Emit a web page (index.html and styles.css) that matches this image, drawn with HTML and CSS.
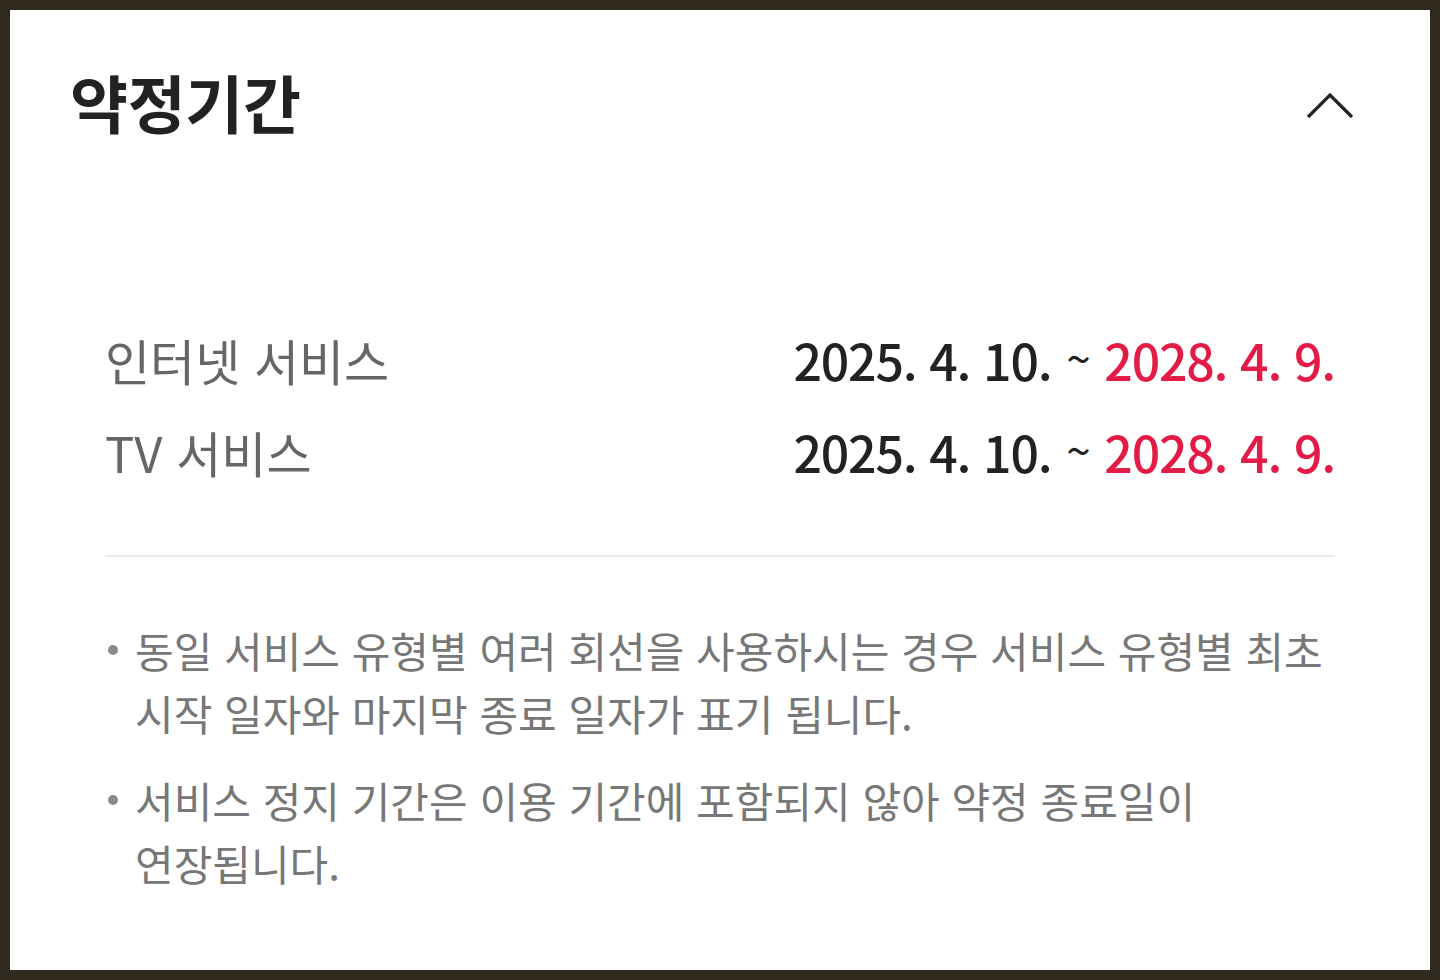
FILE: index.html
```html
<!DOCTYPE html>
<html lang="ko">
<head>
  <meta charset="UTF-8" />
  <title>약정기간</title>
  <link rel="stylesheet" href="styles.css">
</head>
<body>
  <div class="card">
    <!-- Header -->
    <div class="card-head">
      <h2 class="card-title">약정기간</h2>
      <button class="toggle" type="button" aria-label="접기">
        <svg width="50" height="30" viewBox="0 0 50 30">
          <polyline points="2,26 24,4 46,26" fill="none" stroke="#222" stroke-width="3.2"/>
        </svg>
      </button>
    </div>

    <!-- Contract periods -->
    <div class="periods">
      <div class="period-row">
        <span class="period-name">인터넷 서비스</span>
        <span class="period-date">2025. 4. 10. <span class="tilde">~</span> <em class="end">2028. 4. 9.</em></span>
      </div>
      <div class="period-row">
        <span class="period-name">TV 서비스</span>
        <span class="period-date">2025. 4. 10. <span class="tilde">~</span> <em class="end">2028. 4. 9.</em></span>
      </div>
    </div>

    <!-- Notes -->
    <ul class="notes">
      <li>동일 서비스 유형별 여러 회선을 사용하시는 경우 서비스 유형별 최초 시작 일자와 마지막 종료 일자가 표기 됩니다.</li>
      <li>서비스 정지 기간은 이용 기간에 포함되지 않아 약정 종료일이<br>연장됩니다.</li>
    </ul>
  </div>
</body>
</html>
```

FILE: styles.css
```css
body {
  margin: 0;
  padding: 10px;
  background: #2f291e;
  font-family: "Noto Sans CJK KR", "Noto Sans", sans-serif;
}

.card {
  background: #fff;
  height: 960px;
  box-sizing: border-box;
  padding: 0 95px 0 95px;
  overflow: hidden;
}

.card-head {
  display: flex;
  justify-content: space-between;
  align-items: center;
  margin: 0 -21px 0 -35px;
  height: 190px;
}

.card-title {
  margin: 0;
  font-size: 63px;
  font-weight: 700;
  color: #222;
  letter-spacing: -0.3px;
  position: relative;
  top: -5px;
}

.toggle {
  background: none;
  border: none;
  padding: 0;
  cursor: pointer;
  position: relative;
  top: 1px;
}

.toggle svg {
  display: block;
}

.periods {
  padding-top: 113px;
  padding-bottom: 58px;
  border-bottom: 2px solid #ebebeb;
}

.period-row {
  display: flex;
  justify-content: space-between;
  align-items: baseline;
  height: 92px;
  line-height: 92px;
}

.period-name {
  font-size: 49px;
  color: #666;
}

.period-date {
  font-size: 50px;
  font-weight: 500;
  color: #222;
  letter-spacing: -1.2px;
}

.tilde {
  font-size: 44px;
  font-weight: 400;
  line-height: 0;
  vertical-align: 5px;
  margin: 0 2px;
}

.end {
  font-style: normal;
  color: #e31c47;
}

.notes {
  list-style: none;
  margin: 0;
  padding: 61px 0 0 30px;
}

.notes li {
  position: relative;
  font-size: 42px;
  line-height: 63px;
  color: #777;
  margin-bottom: 24px;
  word-break: keep-all;
}

.notes li::before {
  content: "";
  position: absolute;
  left: -27px;
  top: 27px;
  width: 10px;
  height: 10px;
  border-radius: 50%;
  background: #8a8a8a;
}
```
